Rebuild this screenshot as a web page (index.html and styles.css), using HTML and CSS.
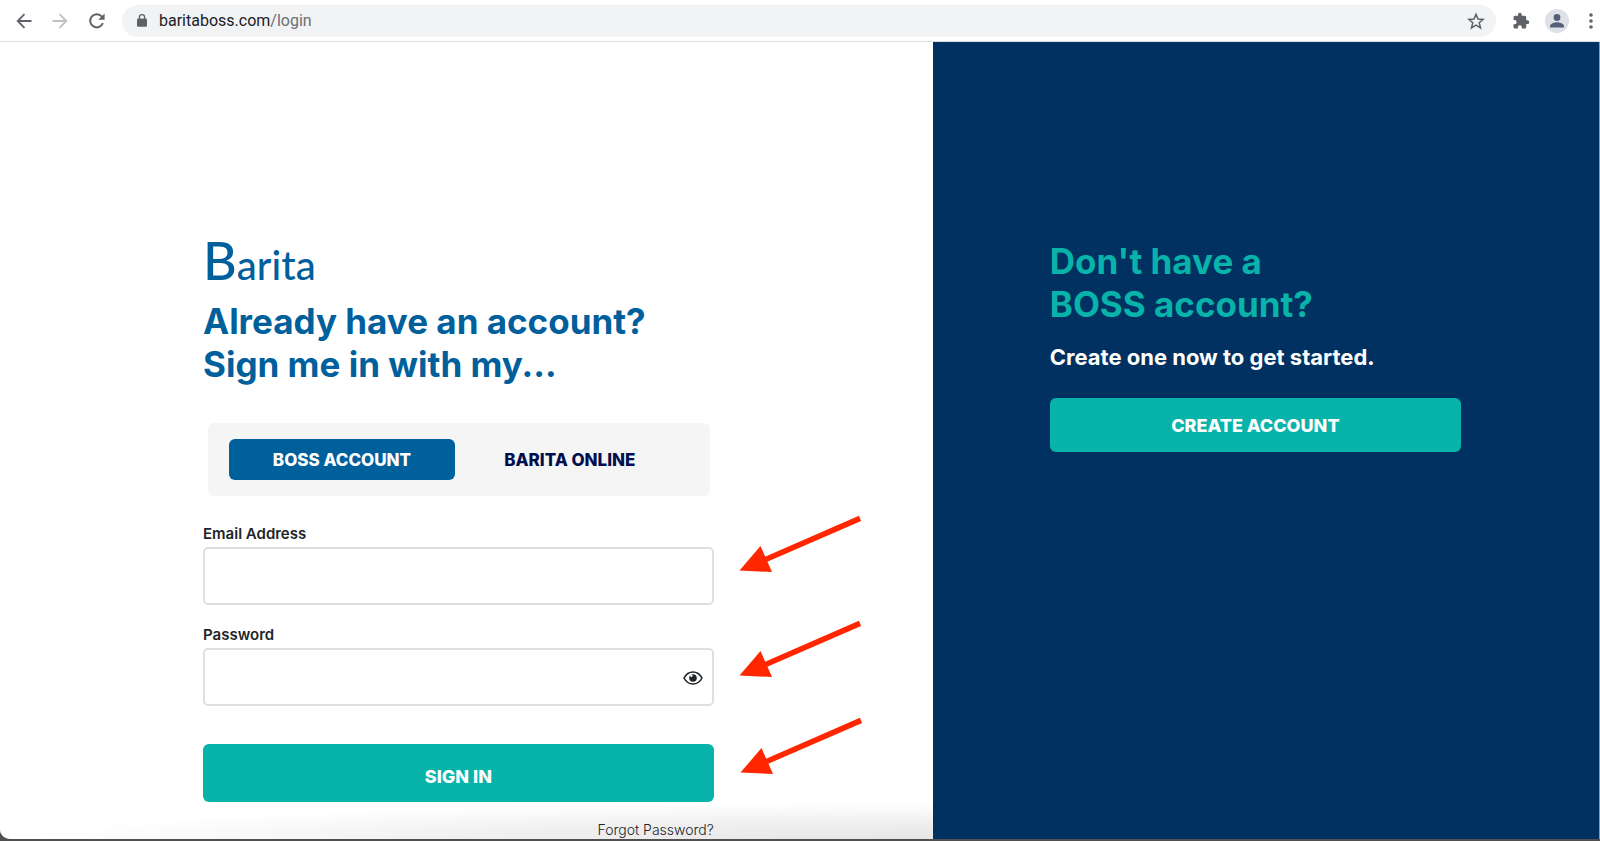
FILE: index.html
```
<!DOCTYPE html>
<html lang="en">
<head>
    <meta charset="UTF-8">
    <meta name="viewport" content="width=device-width, initial-scale=1.0">
    <title>Barita BOSS Login</title>
    <link rel="stylesheet" href="styles.css">
</head>
<body>
    <header class="toolbar">
        <button class="tool" aria-label="Back">
            <svg width="16" height="16" viewBox="0 0 16 16"><path d="M15.5 8H2M8.5 1.2L1.7 8l6.8 6.8" fill="none" stroke="#5f6368" stroke-width="1.8"/></svg>
        </button>
        <button class="tool" aria-label="Forward" disabled>
            <svg width="16" height="16" viewBox="0 0 16 16"><path d="M.5 8H14M7.5 1.2L14.3 8l-6.8 6.8" fill="none" stroke="#bdc1c6" stroke-width="1.8"/></svg>
        </button>
        <button class="tool" aria-label="Reload">
            <svg width="18" height="18" viewBox="0 0 18 18"><path d="M14.9 11.2A6.6 6.6 0 1 1 13.7 4.4L15 5.8" fill="none" stroke="#5f6368" stroke-width="2"/><path d="M16.6 1.4v6.4h-6.4z" fill="#5f6368"/></svg>
        </button>
        <div class="address">
            <svg width="10" height="13" viewBox="0 0 10 13"><rect y="4.6" width="10" height="8.2" rx="1.2" fill="#5f6368"/><path d="M2.4 5V3.3a2.6 2.6 0 0 1 5.2 0V5" fill="none" stroke="#5f6368" stroke-width="1.3"/></svg>
            <span class="url">baritaboss.com<span class="path">/login</span></span>
            <button class="tool" aria-label="Bookmark">
                <svg width="18" height="18" viewBox="0 0 18 18"><path d="M9 2.2l2 4.8 5.2.4-4 3.4 1.3 5.1L9 13.2l-4.5 2.7 1.3-5.1-4-3.4L7 7z" fill="none" stroke="#5f6368" stroke-width="1.5"/></svg>
            </button>
        </div>
        <div class="tools">
            <button class="tool" aria-label="Extensions">
                <svg width="18" height="18" viewBox="0 0 24 24"><path d="M20.5 11H19V7a2 2 0 0 0-2-2h-4V3.5a2.5 2.5 0 0 0-5 0V5H4a2 2 0 0 0-2 2v3.8h1.5a2.7 2.7 0 0 1 0 5.4H2V20c0 1.1.9 2 2 2h3.8v-1.5a2.7 2.7 0 0 1 5.4 0V22H17a2 2 0 0 0 2-2v-4h1.5a2.5 2.5 0 0 0 0-5z" fill="#5f6368"/></svg>
            </button>
            <button class="tool" aria-label="Profile">
                <svg width="24" height="24" viewBox="0 0 24 24"><circle cx="12" cy="12" r="12" fill="#dee1e6"/><circle cx="12" cy="8.5" r="3.4" fill="#54607a"/><path d="M5 18.5V17c0-2.3 4.6-3.7 7-3.7s7 1.4 7 3.7v1.5z" fill="#54607a"/></svg>
            </button>
        </div>
        <button class="tool" aria-label="Menu">
            <svg width="4" height="16" viewBox="0 0 4 16"><g fill="#5f6368"><circle cx="2" cy="2" r="1.8"/><circle cx="2" cy="8" r="1.8"/><circle cx="2" cy="14" r="1.8"/></g></svg>
        </button>
    </header>

    <main class="page">
        <section class="login">
            <form class="login-form">
                <div class="logo"><span class="logo-cap">B</span>arita</div>
                <h1>Already have an account?<br>Sign me in with my...</h1>

                <div class="tabs">
                    <button type="button" class="tab active">BOSS ACCOUNT</button>
                    <button type="button" class="tab">BARITA ONLINE</button>
                </div>

                <div class="field">
                    <label for="email">Email Address</label>
                    <input type="email" id="email">
                </div>
                <div class="field">
                    <label for="password">Password</label>
                    <div class="password-box">
                        <input type="password" id="password">
                        <button type="button" class="eye" aria-label="Show password">
                            <svg width="20" height="14" viewBox="0 0 20 14"><path d="M1 7c2-3.8 5.300-6 9-6s7 2.200 9 6c-2 3.800-5.300 6-9 6S3 10.800 1 7z" fill="none" stroke="#212529" stroke-width="1.600"/><circle cx="10" cy="7" r="3.800" fill="#212529"/><circle cx="8.400" cy="4.800" r="1.200" fill="#fff"/></svg>
                        </button>
                    </div>
                </div>

                <button type="button" class="btn btn-signin">SIGN IN</button>
                <a class="forgot" href="#">Forgot Password?</a>

                <!-- Arrows pointing at the two fields and the button -->
                <svg class="arrows" width="130" height="270" viewBox="0 0 130 270">
                    <defs>
                        <g id="arrow">
                            <path d="M.500 55.500L21.500 31l11.500 26z" fill="#ff2600"/>
                            <path d="M26 44.700L121 3.400" stroke="#ff2600" stroke-width="5.600"/>
                        </g>
                    </defs>
                    <use href="#arrow"/>
                    <use href="#arrow" y="105"/>
                    <use href="#arrow" x="1" y="202"/>
                </svg>
            </form>
        </section>

        <section class="signup">
            <h2>Don't have a<br>BOSS account?</h2>
            <p>Create one now to get started.</p>
            <button type="button" class="btn btn-create">CREATE ACCOUNT</button>
        </section>
    </main>
</body>
</html>
```
FILE: styles.css
```
* {
    box-sizing: border-box;
}
body {
    margin: 0;
    min-height: 100vh;
    display: flex;
    flex-direction: column;
    background: #505050;
    font-family: Inter, "Liberation Sans", sans-serif;
    color: #212529;
}
button {
    font-family: inherit;
    border: none;
    padding: 0;
    cursor: pointer;
}
svg {
    display: block;
}

/* Browser toolbar */
.toolbar {
    display: flex;
    align-items: center;
    gap: 20px;
    height: 42px;
    padding: 0 7px 0 16px;
    background: #fff;
    border-bottom: 1px solid #dcdddf;
}
.tool {
    background: none;
}
.tools {
    display: flex;
    align-items: center;
    gap: 15px;
}
.address {
    flex: 1;
    display: flex;
    align-items: center;
    height: 32px;
    margin: 0 -4px;
    padding: 0 11px 0 15px;
    border-radius: 16px;
    background: #f1f3f4;
}
.url {
    flex: 1;
    margin-left: 12px;
    font-family: Roboto, sans-serif;
    font-size: 16px;
    color: #202124;
}
.path {
    color: #6b6f73;
}

/* Page */
.page {
    flex: 1;
    display: grid;
    grid-template-columns: 7fr 5fr;
    margin-bottom: 2px;
    border-right: 1px solid #8a97ad;
    border-bottom-left-radius: 10px;
    background: #fff;
    overflow: hidden;
}
.login {
    padding: 198px 219px 0 203px;
    background: radial-gradient(ellipse 900px 36px at 100% 100%, #e6e6e6, #f0f0f0 50%, #fff);
}
.login-form {
    position: relative;
    display: flex;
    flex-direction: column;
}
.logo {
    height: 60px;
    line-height: 40px;
    font-family: Lato, sans-serif;
    font-size: 40px;
    font-weight: 500;
    color: #00609c;
}
.logo-cap {
    font-size: 52px;
}
h1, h2 {
    margin: 0;
    font-size: 35px;
    line-height: 43px;
    font-weight: 700;
}
h1 {
    color: #00609c;
    white-space: nowrap;
}
.tabs {
    display: flex;
    gap: 2px;
    margin: 37px 4px 27px 5px;
    padding: 16px 27px 16px 21px;
    border-radius: 6px;
    background: #f5f5f5;
}
.tab {
    flex: 1;
    height: 41px;
    border-radius: 6px;
    background: none;
    font-size: 17px;
    font-weight: 800;
    color: #00104f;
}
.tab.active {
    background: #00609c;
    color: #fff;
}
.field {
    margin-bottom: 19px;
}
.field label {
    display: block;
    height: 24px;
    line-height: 22px;
    font-size: 15px;
    font-weight: 600;
}
.field input {
    display: block;
    width: 100%;
    height: 58px;
    padding: 0 16px;
    border: 2px solid #dedfe0;
    border-radius: 5px;
    background: #fff;
    font-size: 16px;
}
.password-box {
    position: relative;
}
.eye {
    position: absolute;
    top: 23px;
    right: 11px;
    background: none;
}
.btn {
    width: 100%;
    border-radius: 6px;
    background: #08b3a9;
    color: #fff;
    font-size: 18px;
    font-weight: 800;
}
.btn-signin {
    height: 58px;
    margin-top: 19px;
    padding-top: 6px;
}
.forgot {
    align-self: flex-end;
    margin-top: 19px;
    line-height: 18px;
    font-size: 14px;
    font-weight: 300;
    color: #212529;
    text-decoration: none;
}
.arrows {
    position: absolute;
    left: calc(100% + 25px);
    top: 275px;
}
.signup {
    padding: 198px 138px 0 117px;
    background: #003160;
}
.signup h2 {
    color: #08b3a9;
    white-space: nowrap;
}
.signup p {
    margin: 15px 0 25px;
    line-height: 32px;
    font-size: 22px;
    font-weight: 700;
    color: #fff;
    white-space: nowrap;
}
.btn-create {
    height: 54px;
}
```
